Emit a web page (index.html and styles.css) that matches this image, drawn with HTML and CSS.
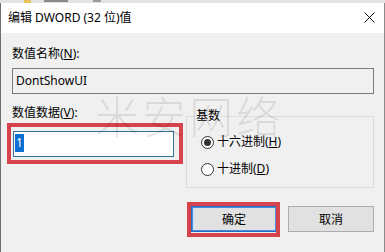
FILE: index.html
```html
<!DOCTYPE html>
<html>
<head>
<meta charset="utf-8">
<link rel="stylesheet" href="styles.css">
</head>
<body>
<div class="desk"><span class="desk-icon"></span><span class="desk-text"></span><span class="desk-text2"></span></div>
<div class="window">
  <div class="titlebar">
    <span class="title">编辑 DWORD (32 位)值</span>
    <svg class="close" width="11" height="11" viewBox="0 0 11 11"><path d="M0.5 0.5 L10.5 10.5 M10.5 0.5 L0.5 10.5" stroke="#111" stroke-width="1" fill="none"/></svg>
  </div>
  <div class="content">
    <div class="label">数值名称(<u>N</u>):</div>
    <div class="namebox">DontShowUI</div>
    <div class="row">
      <div class="col">
        <div class="label">数值数据(<u>V</u>):</div>
        <div class="valuewrap">
          <div class="valuebox"><span class="sel">1</span></div>
          <div class="mark mark-value"></div>
        </div>
      </div>
      <fieldset class="group">
        <legend>基数</legend>
        <div class="radio-row first"><span class="radio checked"></span>十六进制(<u>H</u>)</div>
        <div class="radio-row"><span class="radio"></span>十进制(<u>D</u>)</div>
      </fieldset>
    </div>
    <div class="buttons">
      <div class="btnwrap">
        <div class="btn default">确定</div>
        <div class="mark mark-ok"></div>
      </div>
      <div class="btn">取消</div>
    </div>
    <div class="watermark">米安网络</div>
  </div>
</div>
</body>
</html>
```

FILE: styles.css
```css
* { box-sizing: border-box; }
html, body {
  margin: 0;
  padding: 0;
  width: 385px;
  height: 252px;
  overflow: hidden;
  background: #f0f0f0;
  font-family: "Noto Sans", "Noto Sans CJK SC", sans-serif;
  font-size: 12px;
  line-height: 16px;
  color: #000;
}
.desk {
  height: 3px;
  background: #e4e4e4;
  position: relative;
  display: flex;
}
.desk-icon {
  margin-left: 24px;
  width: 7px;
  height: 3px;
  background: #e8c25a;
}
.desk-text {
  margin-left: 13px;
  width: 24px;
  height: 2px;
  background: #8a8a8a;
}
.desk-text2 {
  margin-left: 25px;
  width: 8px;
  height: 2px;
  background: #9a9a9a;
}
.window {
  position: relative;
  height: 249px;
  border-left: 1px solid #6e6e6e;
  border-right: 1px solid #8c8c8c;
  display: flex;
  flex-direction: column;
}
.titlebar {
  height: 30px;
  background: #fff;
  display: flex;
  align-items: center;
  justify-content: space-between;
  padding-left: 7px;
  padding-right: 9px;
}
.title {
  font-size: 12px;
  line-height: 16px;
  padding-bottom: 1px;
}
.close { display: block; margin-top: -2px; }
.content {
  flex: 1;
  padding: 13px 10px 0 11px;
  display: flex;
  flex-direction: column;
}
.label { height: 16px; white-space: nowrap; }
u { text-decoration: underline; text-underline-offset: 1px; }
.namebox {
  margin-top: 6px;
  height: 26px;
  border: 1px solid #7a7a7a;
  background: #f0f0f0;
  padding-left: 3px;
  line-height: 23px;
}
.row {
  margin-top: 11px;
  display: flex;
  align-items: flex-start;
}
.col { display: flex; flex-direction: column; }
.valuewrap {
  position: relative;
  margin-top: 10px;
  margin-left: 1px;
  width: 161px;
  height: 26px;
}
.valuebox {
  width: 161px;
  height: 26px;
  border: 1px solid #2f7597;
  background: #fff;
  padding: 2px 0 0 1px;
}
.sel {
  display: inline-block;
  background: #0a6fd0;
  color: #fff;
  line-height: 18px;
  height: 18px;
  padding: 0 1px;
}
.mark {
  position: absolute;
  border: 4px solid #d6434c;
  pointer-events: none;
}
.mark-value { top: -8px; left: -6px; right: -9px; bottom: -7px; }
.group {
  margin: 3px 0 0 auto;
  width: 188px;
  min-width: 0;
  border: 1px solid #dcdcdc;
  padding: 0 0 10px 14px;
}
.group legend {
  padding: 0 1px;
  margin-left: -6px;
  line-height: 16px;
}
.radio-row {
  display: flex;
  align-items: center;
  height: 16px;
  margin-top: 11px;
  white-space: nowrap;
}
.radio-row.first { margin-top: 10px; }
.radio {
  width: 13px;
  height: 13px;
  border: 1px solid #333;
  border-radius: 50%;
  background: #fff;
  margin-right: 3px;
  display: flex;
  align-items: center;
  justify-content: center;
}
.radio.checked::after {
  content: "";
  width: 7px;
  height: 7px;
  border-radius: 50%;
  background: #333;
}
.buttons {
  margin-top: 18px;
  display: flex;
  justify-content: flex-end;
  gap: 11px;
}
.btnwrap { position: relative; }
.btn {
  width: 86px;
  height: 26px;
  background: #e1e1e1;
  border: 1px solid #adadad;
  display: flex;
  align-items: center;
  justify-content: center;
  font-family: "Noto Sans CJK SC", sans-serif;
}
.btn.default {
  border: 1px solid #1f6fc4;
  box-shadow: inset 0 0 0 1px #4a8ad6, inset 2px 0 0 1px #cfe3f7;
}
.mark-ok { top: -4px; left: -4px; right: -3px; bottom: -5px; }
.watermark {
  position: absolute;
  left: 94px;
  top: 90px;
  font-family: "Noto Sans CJK SC", sans-serif;
  font-weight: 200;
  font-size: 44px;
  line-height: 44px;
  letter-spacing: 3px;
  color: rgba(0, 0, 0, 0.1);
  pointer-events: none;
  white-space: nowrap;
}
```
